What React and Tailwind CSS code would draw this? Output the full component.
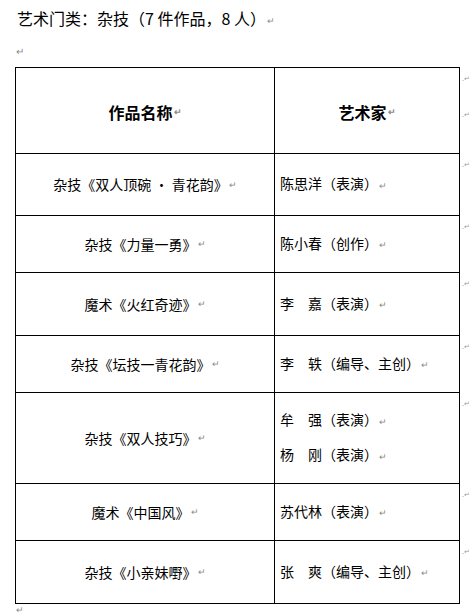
const FONT = { fontFamily: '"Noto Sans CJK SC", "Noto Sans", sans-serif' }

const rows = [
  { work: '杂技《双人顶碗 · 青花韵》', artists: ['陈思洋（表演）'], h: 'h-[62px]' },
  { work: '杂技《力量一勇》', artists: ['陈小春（创作）'], h: 'h-[57px]' },
  { work: '魔术《火红奇迹》', artists: ['李　嘉（表演）'], h: 'h-[63px]' },
  { work: '杂技《坛技一青花韵》', artists: ['李　轶（编导、主创）'], h: 'h-[57px]' },
  { work: '杂技《双人技巧》', artists: ['牟　强（表演）', '杨　刚（表演）'], h: 'h-[91px]' },
  { work: '魔术《中国风》', artists: ['苏代林（表演）'], h: 'h-[57px]' },
  { work: '杂技《小亲妹嘢》', artists: ['张　爽（编导、主创）'], h: 'h-[64px]', last: true },
]

const Mark = () => <span className="text-[9px] text-[#8a8a8a] ml-[1px] align-middle">↵</span>

const RowEnd = () => (
  <div className="w-[14px] pl-[2px] pt-[8px] text-[7px] leading-none text-[#9a9a9a]">.↵</div>
)

export default function App() {
  return (
    <div className="w-[476px] h-[616px] bg-white text-black overflow-hidden" style={FONT}>
      <div className="pl-[17px] pt-[8px] h-[44px] text-[16px] leading-[20px]">
        艺术门类：杂技（7 件作品，8 人）<Mark />
      </div>
      <div className="pl-[16px] pt-[2px] h-[23px] text-[10px] leading-none text-[#8a8a8a]">↵</div>

      <div className="pl-[15px] flex flex-col">
        <div className="flex h-[86px]">
          <div className="w-[259px] border-l border-t border-black flex items-center justify-center pt-[3px] text-[16px] font-bold">
            作品名称<Mark />
          </div>
          <div className="w-[186px] border-l border-r border-t border-black flex items-center justify-center pt-[3px] text-[16px] font-bold">
            艺术家<Mark />
          </div>
          <div className="flex flex-col">
            <RowEnd />
            <div className="pt-[29px] pl-[2px] text-[7px] leading-none text-[#9a9a9a]">.↵</div>
          </div>
        </div>

        {rows.map((r, i) => (
          <div key={i} className={`flex ${r.h}`}>
            <div className={`w-[259px] border-l border-t border-black flex items-center justify-center text-[14px] ${r.last ? 'border-b' : ''}`}>
              {r.work}<Mark />
            </div>
            <div className={`w-[186px] border-l border-r border-t border-black flex flex-col justify-center pl-[5px] text-[14px] ${r.last ? 'border-b' : ''}`}>
              {r.artists.map((a, j) => (
                <div key={j} className={r.artists.length > 1 ? 'leading-[33px]' : 'leading-[20px]'}>
                  {a}<Mark />
                </div>
              ))}
            </div>
            <RowEnd />
          </div>
        ))}
      </div>

      <div className="pl-[16px] pt-[1px] text-[9px] leading-[10px] text-[#8a8a8a]">↵</div>
    </div>
  )
}
